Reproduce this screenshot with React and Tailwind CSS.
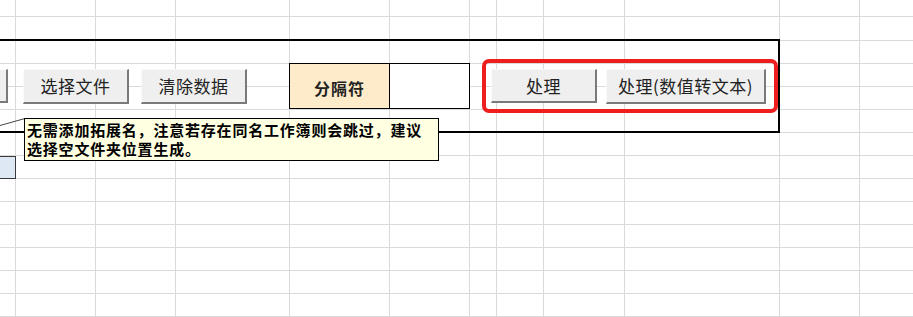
import React from "react";

// column widths / row heights of the sheet (px, including the 1px grid line)
const COLS = [16, 80, 80, 114, 100, 80, 27, 47, 81, 155, 80, 80];
const ROWS = [17, 24, 23, 23, 23, 23, 23, 23, 23, 23, 23, 23, 23, 23];

const CJK = { fontFamily: '"Noto Sans CJK SC", "Liberation Sans", sans-serif' };

const SheetButton = ({ children, className = "" }) => (
  <div
    className={`flex shrink-0 items-center justify-center bg-[#efefef] border-t border-l border-[#fafafa] border-r-2 border-b-2 border-r-[#7a7a7a] border-b-[#7a7a7a] text-[17px] tracking-[0.5px] text-[#222] ${className}`}
    style={CJK}
  >
    {children}
  </div>
);

export default function App() {
  return (
    <div className="relative w-[913px] h-[317px] overflow-hidden bg-white" style={CJK}>
      {/* grid */}
      <div className="flex flex-col">
        {ROWS.map((h, r) => (
          <div key={r} className="flex" style={{ height: h }}>
            {COLS.map((w, c) => {
              const blue = r === 7 && c === 0;
              return (
                <div
                  key={c}
                  className={
                    blue
                      ? "shrink-0 border-r border-b border-[#3a3a3a] bg-[#dde8f4] shadow-[inset_0_1px_0_#3a3a3a]"
                      : "shrink-0 border-r border-b border-[#dadada]"
                  }
                  style={{ width: w }}
                />
              );
            })}
          </div>
        ))}
      </div>

      {/* black frame with the controls */}
      <div className="absolute left-[-4px] top-[39px] flex h-[94px] w-[784px] items-center border-2 border-black">
        <SheetButton className="ml-[-98px] w-[108px] h-[34px]" />
        <SheetButton className="ml-[15px] w-[106px] h-[35px]">选择文件</SheetButton>
        <SheetButton className="ml-[12px] w-[106px] h-[35px]">清除数据</SheetButton>

        <div className="ml-[42px] flex h-[46px] shrink-0 border border-black">
          <div className="flex w-[100px] items-center justify-center bg-[#fdebc9] border-r border-black pt-[3px] text-[16px] font-bold tracking-[1px] text-[#222]">
            分隔符
          </div>
          <div className="w-[79px] bg-white" />
        </div>

        <div className="ml-[12px] flex h-[54px] w-[296px] shrink-0 items-center gap-[9px] rounded-[7px] border-[4px] border-[#ee1e1e] pl-[5px]">
          <SheetButton className="w-[106px] h-[34px]">处理</SheetButton>
          <SheetButton className="w-[160px] h-[35px]">处理(数值转文本)</SheetButton>
        </div>
      </div>

      {/* comment connector */}
      <svg className="absolute left-0 top-[115px]" width="26" height="14">
        <line x1="0" y1="10.5" x2="25" y2="3.5" stroke="#444" strokeWidth="1" />
      </svg>

      {/* comment */}
      <div className="absolute left-[24px] top-[118px] w-[415px] h-[43px] border border-black bg-[#ffffe1] pl-[2px] pt-px text-[15px] font-bold leading-[19px] tracking-[0.8px] text-black">
        <div>无需添加拓展名，注意若存在同名工作簿则会跳过，建议</div>
        <div>选择空文件夹位置生成。</div>
      </div>
    </div>
  );
}
